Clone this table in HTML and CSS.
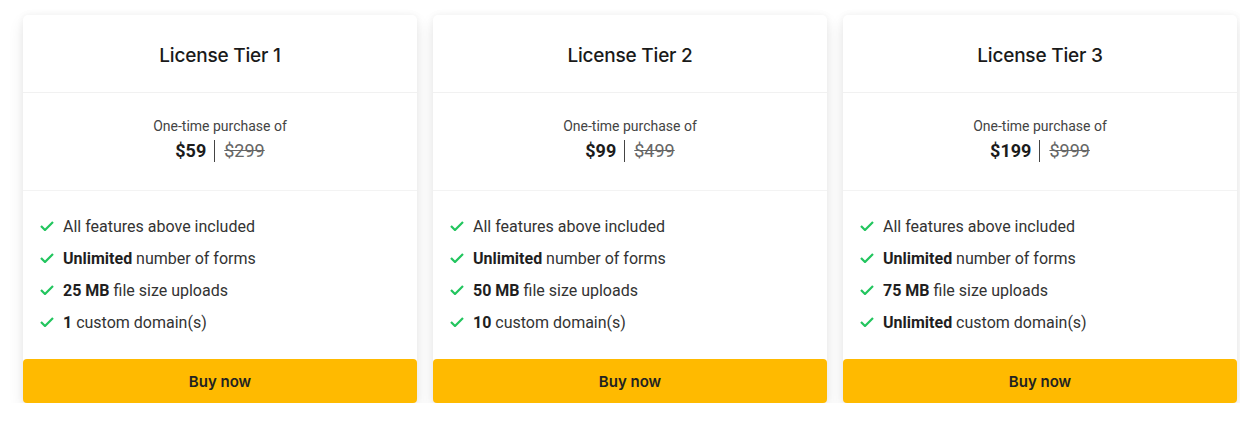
FILE: index.html
```html
<!DOCTYPE html>
<html lang="en">
<head>
<meta charset="utf-8">
<title>License Tiers</title>
<link rel="stylesheet" href="styles.css">
</head>
<body>
<div class="tiers">
  <div class="card">
    <div class="card-head">License Tier 1</div>
    <div class="card-price">
      <div class="price-label">One-time purchase of</div>
      <div class="price-line"><span class="price-now">$59</span><span class="price-old">$299</span></div>
    </div>
    <ul class="features">
      <li><svg class="check" viewBox="0 0 14 10"><path d="M1 5 L5 9 L13 1"/></svg><span>All features above included</span></li>
      <li><svg class="check" viewBox="0 0 14 10"><path d="M1 5 L5 9 L13 1"/></svg><span><b>Unlimited</b> number of forms</span></li>
      <li><svg class="check" viewBox="0 0 14 10"><path d="M1 5 L5 9 L13 1"/></svg><span><b>25 MB</b> file size uploads</span></li>
      <li><svg class="check" viewBox="0 0 14 10"><path d="M1 5 L5 9 L13 1"/></svg><span><b>1</b> custom domain(s)</span></li>
    </ul>
    <button class="buy">Buy now</button>
  </div>
  <div class="card">
    <div class="card-head">License Tier 2</div>
    <div class="card-price">
      <div class="price-label">One-time purchase of</div>
      <div class="price-line"><span class="price-now">$99</span><span class="price-old">$499</span></div>
    </div>
    <ul class="features">
      <li><svg class="check" viewBox="0 0 14 10"><path d="M1 5 L5 9 L13 1"/></svg><span>All features above included</span></li>
      <li><svg class="check" viewBox="0 0 14 10"><path d="M1 5 L5 9 L13 1"/></svg><span><b>Unlimited</b> number of forms</span></li>
      <li><svg class="check" viewBox="0 0 14 10"><path d="M1 5 L5 9 L13 1"/></svg><span><b>50 MB</b> file size uploads</span></li>
      <li><svg class="check" viewBox="0 0 14 10"><path d="M1 5 L5 9 L13 1"/></svg><span><b>10</b> custom domain(s)</span></li>
    </ul>
    <button class="buy">Buy now</button>
  </div>
  <div class="card">
    <div class="card-head">License Tier 3</div>
    <div class="card-price">
      <div class="price-label">One-time purchase of</div>
      <div class="price-line"><span class="price-now">$199</span><span class="price-old">$999</span></div>
    </div>
    <ul class="features">
      <li><svg class="check" viewBox="0 0 14 10"><path d="M1 5 L5 9 L13 1"/></svg><span>All features above included</span></li>
      <li><svg class="check" viewBox="0 0 14 10"><path d="M1 5 L5 9 L13 1"/></svg><span><b>Unlimited</b> number of forms</span></li>
      <li><svg class="check" viewBox="0 0 14 10"><path d="M1 5 L5 9 L13 1"/></svg><span><b>75 MB</b> file size uploads</span></li>
      <li><svg class="check" viewBox="0 0 14 10"><path d="M1 5 L5 9 L13 1"/></svg><span><b>Unlimited</b> custom domain(s)</span></li>
    </ul>
    <button class="buy">Buy now</button>
  </div>
</div>
</body>
</html>
```

FILE: styles.css
```css
* { box-sizing: border-box; }
html, body { margin: 0; padding: 0; background: #ffffff; }
body {
  font-family: Roboto, "Liberation Sans", Arial, sans-serif;
  color: #222;
  width: 1240px;
  overflow: hidden;
}
.tiers {
  display: flex;
  gap: 16px;
  padding: 15px 0 0 23px;
}
.card {
  flex: 0 0 394px;
  width: 394px;
  height: 388px;
  background: #fff;
  border-radius: 5px;
  box-shadow: 0 7px 16px rgba(0, 0, 0, 0.09), 0 0 7px rgba(0, 0, 0, 0.05);
  display: flex;
  flex-direction: column;
}
.card-head {
  height: 78px;
  border-bottom: 1px solid #f1f1f1;
  display: flex;
  align-items: center;
  justify-content: center;
  font-family: Inter, Roboto, sans-serif;
  font-weight: 500;
  font-size: 19px;
  letter-spacing: -0.2px;
  color: #1a1a1a;
  padding-top: 3px;
}
.card-price {
  height: 98px;
  border-bottom: 1px solid #f3f3f3;
  padding-top: 23px;
  text-align: center;
}
.price-label {
  font-size: 14px;
  line-height: 20px;
  color: #444;
}
.price-line {
  margin-top: 1px;
  display: flex;
  justify-content: center;
  align-items: center;
  height: 28px;
  font-size: 18px;
}
.price-now {
  font-weight: 700;
  color: #1c1c1c;
  padding-right: 8px;
  border-right: 1px solid #444;
  line-height: 22px;
}
.price-old {
  color: #666;
  text-decoration: line-through;
  padding-left: 9px;
  line-height: 22px;
}
.features {
  list-style: none;
  margin: 0;
  padding: 19px 17px 0;
  flex: 1;
}
.features li {
  display: flex;
  align-items: center;
  height: 32px;
  font-size: 16px;
  color: #333;
}
.features b { font-weight: 700; color: #1f1f1f; }
.check {
  width: 14px;
  height: 10px;
  margin-right: 9px;
  fill: none;
  stroke: #22c55e;
  stroke-width: 2.2;
  flex: 0 0 auto;
}
.buy {
  height: 44px;
  border: none;
  border-radius: 4px;
  background: #ffba00;
  font-family: Inter, Roboto, sans-serif;
  font-weight: 600;
  font-size: 15px;
  color: #222;
  cursor: pointer;
}
```
